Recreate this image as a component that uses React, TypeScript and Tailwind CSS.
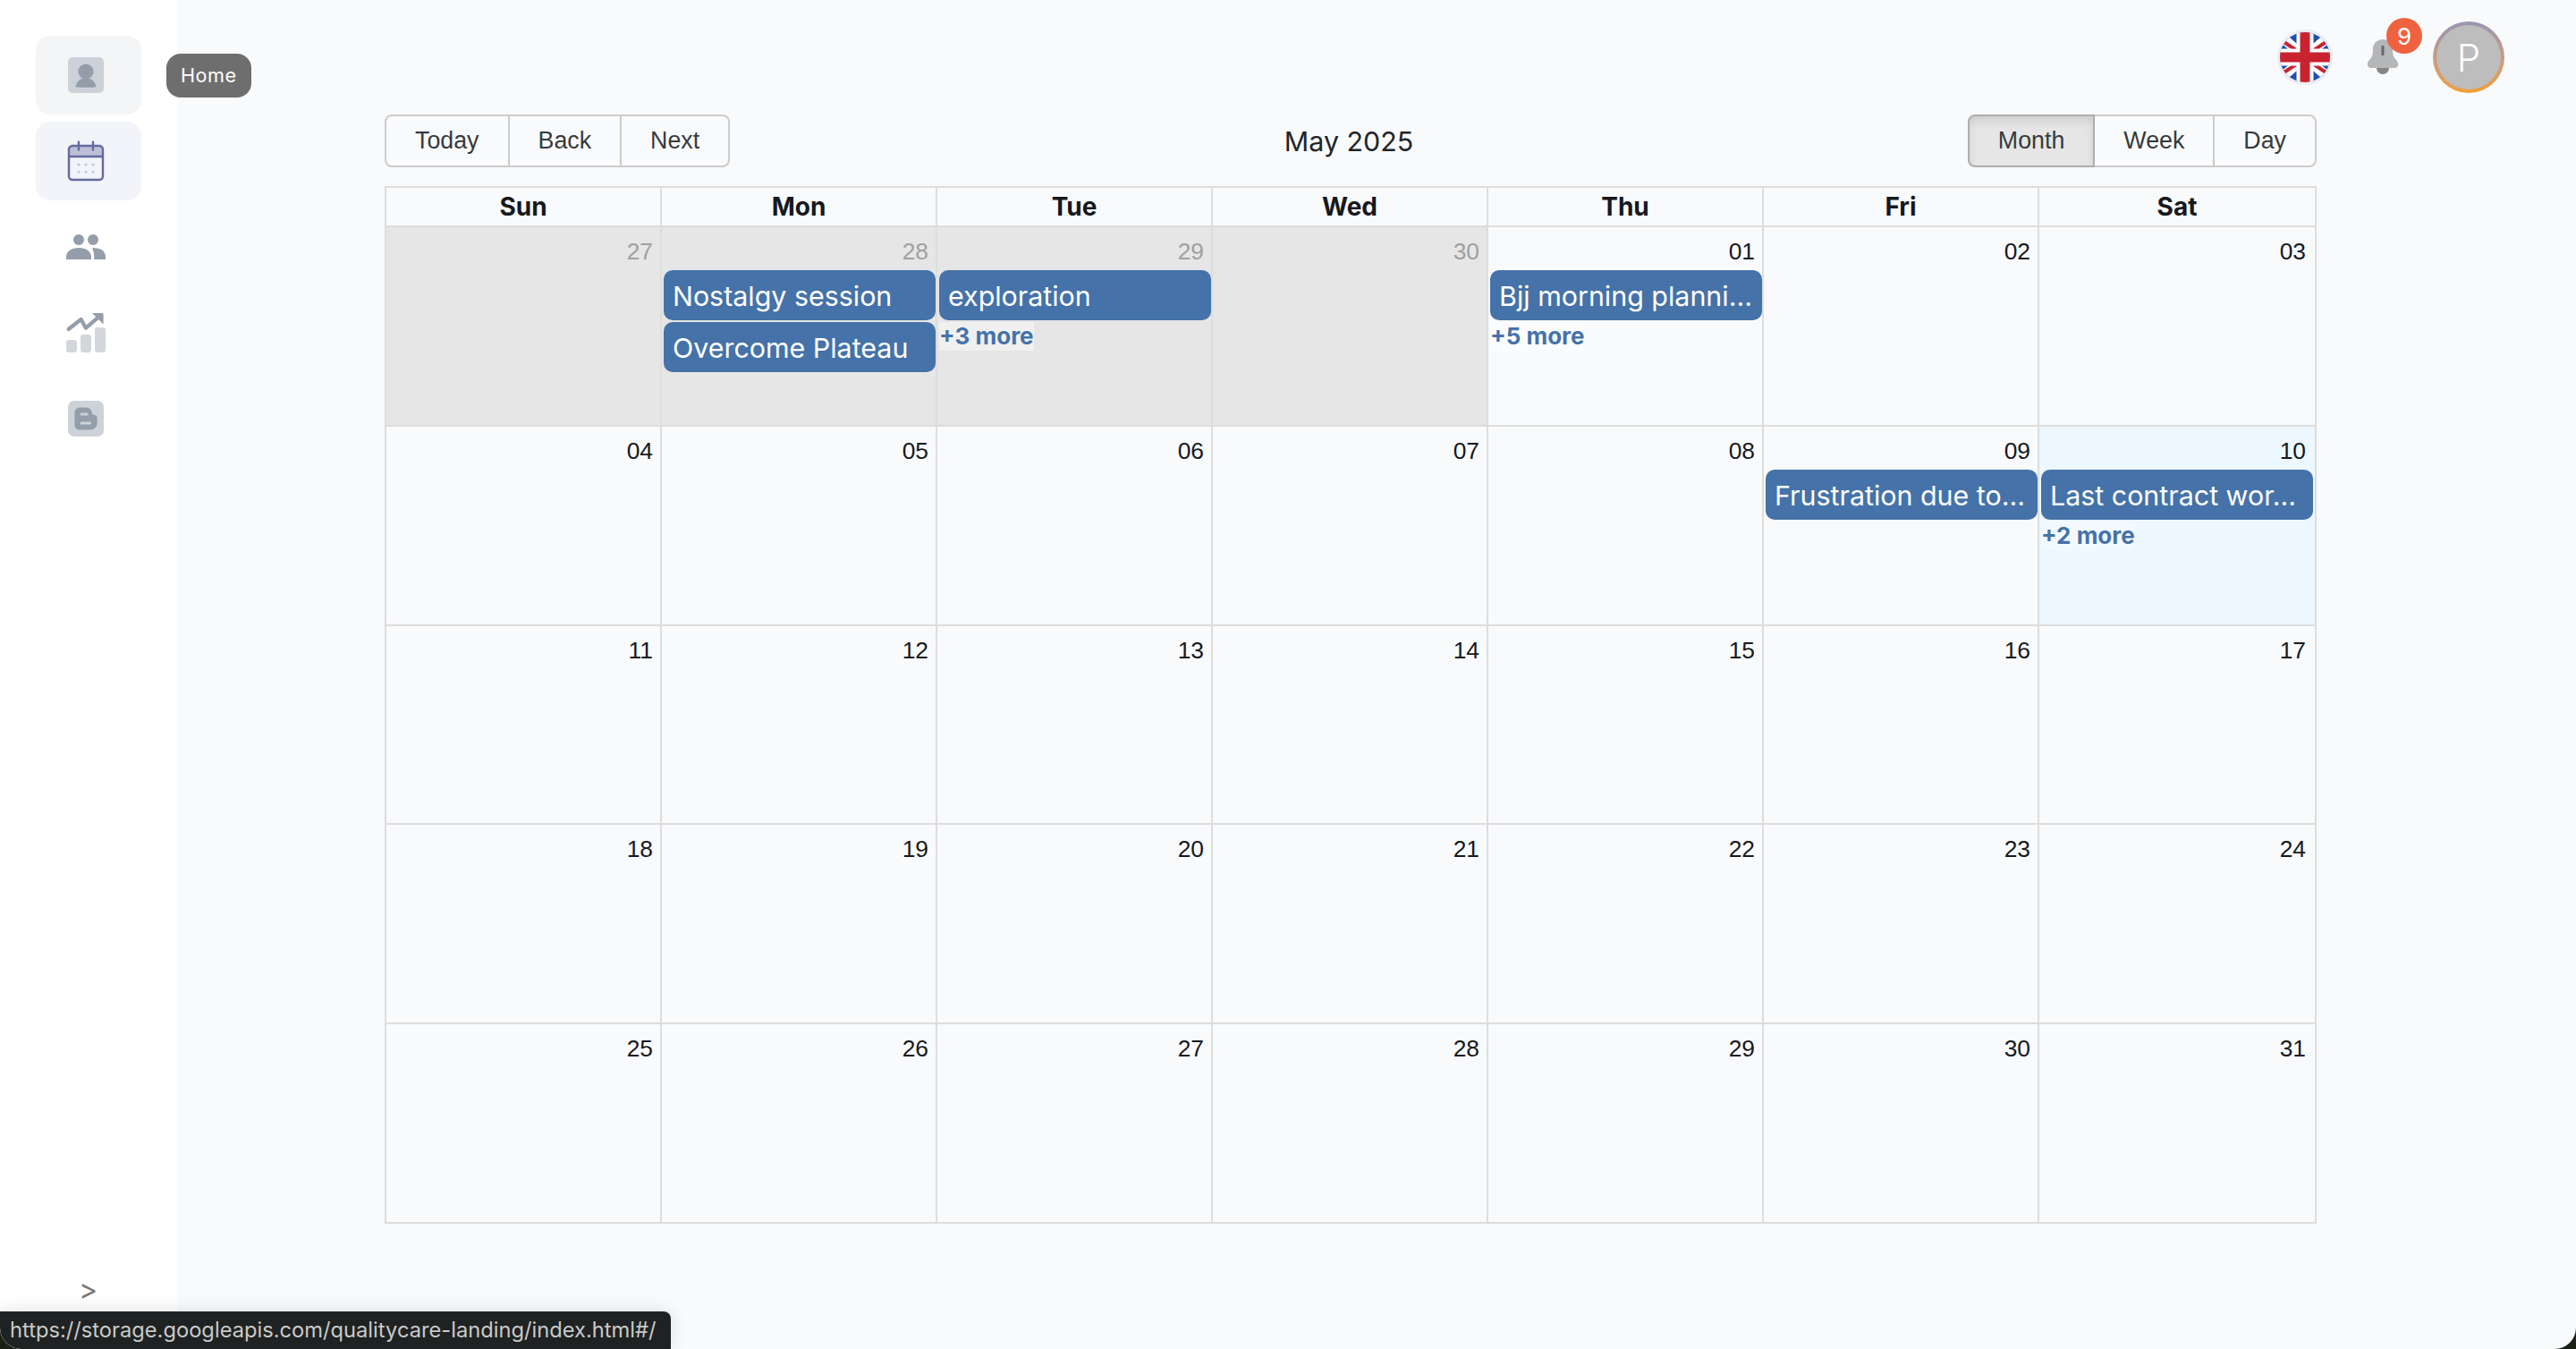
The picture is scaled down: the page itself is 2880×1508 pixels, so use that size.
const weekDays = ["Sun", "Mon", "Tue", "Wed", "Thu", "Fri", "Sat"];

interface DayCell {
  date: string;
  off?: boolean;
  today?: boolean;
  events?: string[];
  more?: number;
}

const weeks: DayCell[][] = [
  [
    { date: "27", off: true },
    { date: "28", off: true, events: ["Nostalgy session", "Overcome Plateau"] },
    { date: "29", off: true, events: ["exploration"], more: 3 },
    { date: "30", off: true },
    { date: "01", events: ["Bjj morning planni…"], more: 5 },
    { date: "02" },
    { date: "03" },
  ],
  [
    { date: "04" },
    { date: "05" },
    { date: "06" },
    { date: "07" },
    { date: "08" },
    { date: "09", events: ["Frustration due to…"] },
    { date: "10", today: true, events: ["Last contract wor…"], more: 2 },
  ],
  ["11", "12", "13", "14", "15", "16", "17"].map((date) => ({ date })),
  ["18", "19", "20", "21", "22", "23", "24"].map((date) => ({ date })),
  ["25", "26", "27", "28", "29", "30", "31"].map((date) => ({ date })),
];

function HomeIcon() {
  return (
    <svg width="48" height="48" viewBox="0 0 24 24">
      <rect x="2" y="2" width="20" height="20" rx="2.5" fill="#cdd2d8" />
      <circle cx="12" cy="10" r="4.3" fill="#939eaa" />
      <path d="M6.3 18.6c.3-3 2.6-5 5.7-5s5.400 2 5.700 5c-3.800.4-7.600.4-11.400 0z" fill="#939eaa" />
    </svg>
  );
}

function CalendarIcon() {
  return (
    <svg width="48" height="48" viewBox="0 0 24 24">
      <path d="M4.500 3.500h15a2 2 0 0 1 2 2v4.200h-19V5.500a2 2 0 0 1 2-2z" fill="#bcbfd6" />
      <rect x="2.500" y="3.500" width="19" height="19" rx="2" fill="none" stroke="#65699f" strokeWidth="1.200" />
      <path d="M2.500 9.500h19" stroke="#65699f" strokeWidth="1.200" />
      <path d="M8 1.300v4.500M16 1.300v4.500" stroke="#65699f" strokeWidth="1.200" strokeLinecap="round" />
      {[8, 12, 16].map((x) =>
        [14, 18].map((y) => <circle key={`${x}-${y}`} cx={x} cy={y} r="0.8" fill="#c5c7de" />),
      )}
    </svg>
  );
}

function PeopleIcon() {
  return (
    <svg width="48" height="48" viewBox="0 0 24 24" fill="#939eaa">
      <circle cx="8" cy="8" r="3" />
      <circle cx="16" cy="8" r="3" />
      <path d="M1 19v-1.500c0-3 3-5 7-5s7 2 7 5V19z" />
      <path d="M15.500 12.700c4.300-.5 7.500 1.400 7.500 4.800V19h-6.400v-1.500c0-1.900-.4-3.500-1.100-4.800z" />
    </svg>
  );
}

function ChartIcon() {
  return (
    <svg width="48" height="48" viewBox="0 0 24 24">
      <rect x="1" y="16" width="6" height="7" rx="1.500" fill="#d3d7dc" />
      <rect x="9" y="13" width="6" height="10" rx="1.500" fill="#d3d7dc" />
      <rect x="17" y="9" width="6" height="14" rx="1.500" fill="#d3d7dc" />
      <path d="M2.300 10l7-5.500 2.700 4.800 7-6" fill="none" stroke="#939eaa" strokeWidth="2.100" strokeLinecap="round" strokeLinejoin="round" />
      <path d="M15.500 1h5.500a.8.8 0 0 1 .8.8v5.400z" fill="#939eaa" />
    </svg>
  );
}

function BlogIcon() {
  return (
    <svg width="48" height="48" viewBox="0 0 24 24">
      <rect x="2" y="2" width="20" height="20" rx="3.500" fill="#cdd2d8" />
      <path d="M8.500 5.700h3.500a3.500 3.500 0 0 1 3.500 3.300c0 .6.400.8 1 .9.900.1 1.800.7 1.800 1.700v2.900a3.800 3.800 0 0 1-3.800 3.800H8.500a2.800 2.800 0 0 1-2.800-2.800V8.500a2.800 2.800 0 0 1 2.800-2.800z" fill="#939eaa" />
      <rect x="8.800" y="8.700" width="4.600" height="1.500" rx="0.750" fill="#cdd2d8" />
      <rect x="8.800" y="13.800" width="6.200" height="1.500" rx="0.750" fill="#cdd2d8" />
    </svg>
  );
}

function UkFlag() {
  return (
    <svg width="56" height="56" viewBox="0 0 56 56">
      <defs>
        <clipPath id="flag-circle">
          <circle cx="28" cy="28" r="28" />
        </clipPath>
      </defs>
      <g clipPath="url(#flag-circle)">
        <rect width="56" height="56" fill="#1f4fb0" />
        <path d="M-2 2L58 54M58 2L-2 54" stroke="#fff" strokeWidth="11" />
        <path d="M0 8L24 24M56 8L32 24M0 48L24 32M56 48L32 32" stroke="#c8232f" strokeWidth="4" />
        <path d="M28 0V56M0 28H56" stroke="#fff" strokeWidth="19" />
        <path d="M28 0V56M0 28H56" stroke="#c8232f" strokeWidth="11" />
      </g>
    </svg>
  );
}

function BellIcon() {
  return (
    <svg width="36" height="40" viewBox="0 0 36 40">
      <path d="M11 32h14a7 7 0 0 1-14 0z" fill="#858585" />
      <path d="M18 0c7 0 11 5 11 11 0 6 1 9 4 12 3 3 3 8-1 9H4c-4-1-4-6-1-9 3-3 4-6 4-12C7 5 11 0 18 0z" fill="#b5b6b8" />
      <rect x="16.500" y="7" width="3" height="11" rx="1" fill="#666" />
    </svg>
  );
}

const navIcons = [HomeIcon, CalendarIcon, PeopleIcon, ChartIcon, BlogIcon];

function Sidebar() {
  return (
    <aside className="relative w-[198px] shrink-0 bg-white flex flex-col pt-[40px] pl-[40px] pb-[50px]">
      <nav className="flex flex-col gap-[8px]">
        {navIcons.map((Icon, i) => (
          <div
            key={i}
            className={`w-[118px] h-[88px] pl-[32px] flex items-center rounded-[16px] ${
              i === 0 ? "bg-[#f4f5f6]" : i === 1 ? "bg-[#f2f4f9]" : ""
            }`}
          >
            <Icon />
          </div>
        ))}
      </nav>
      <div className="absolute left-[186px] top-[60px] z-10 h-[49px] px-[16px] flex items-center rounded-[16px] bg-[#6e6e6e] text-white text-[21.6px] tracking-[0.5px]">
        Home
      </div>
      <div className="mt-auto pl-[48px] text-[32px] leading-[32px] text-[#777]">&gt;</div>
    </aside>
  );
}

function ToolbarGroup({ labels, active }: { labels: string[]; active?: string }) {
  return (
    <div className="flex font-['Liberation_Sans',sans-serif] text-[26.8px] text-[#373a3c]">
      {labels.map((label, i) => (
        <button
          key={label}
          className={`h-[59px] px-[32px] border-2 ${
            label === active
              ? "relative bg-[#e6e6e6] border-[#adadad] shadow-[inset_0_6px_10px_rgba(0,0,0,0.1)]"
              : "border-[#ccc]"
          } ${i > 0 ? "-ml-[2px]" : ""} ${i === 0 ? "rounded-l-[8px]" : ""} ${
            i === labels.length - 1 ? "rounded-r-[8px]" : ""
          }`}
        >
          {label}
        </button>
      ))}
    </div>
  );
}

function DayBox({ day }: { day: DayCell }) {
  return (
    <div
      className={`min-w-0 border-l-2 border-[#ddd] last:pr-[2px] ${
        day.off ? "bg-[#e6e6e6]" : day.today ? "bg-[#ecf7ff]" : ""
      }`}
    >
      <div
        className={`h-[48px] pt-[8px] pr-[8px] text-right font-['Liberation_Sans',sans-serif] text-[26.4px] leading-[38px] ${
          day.off ? "text-[#a0a0a0]" : "text-[#16191d]"
        }`}
      >
        {day.date}
      </div>
      <div className="flex flex-col gap-[2px] pl-[2px]">
        {day.events?.map((title) => (
          <div
            key={title}
            className="h-[56px] px-[10px] rounded-[10px] bg-[#4572a8] text-white text-[30.4px] leading-[58px] whitespace-nowrap overflow-hidden"
          >
            {title}
          </div>
        ))}
        {day.more && (
          <div className="self-start h-[32px] text-[26px] leading-[32px] font-bold text-[#4572a8] bg-white/40">
            +{day.more} more
          </div>
        )}
      </div>
    </div>
  );
}

export default function App() {
  return (
    <div className="h-[1508px] bg-[#1c2014] font-['Inter',sans-serif]">
      <div className="relative h-full flex rounded-b-[24px] overflow-hidden bg-[#f9fafc]">
        <Sidebar />
        <main className="flex-1 min-w-0">
          <header className="h-[128px] pt-[24px] pr-[80px] flex items-start justify-end">
            <div className="h-[80px] flex items-center gap-[38px]">
              <div className="p-[3px] rounded-full bg-[#ecedf0]">
                <UkFlag />
              </div>
              <div className="relative">
                <BellIcon />
                <span className="absolute -top-[24px] left-[22px] w-[40px] h-[40px] rounded-full bg-[#ee6240] text-white text-[26px] flex items-center justify-center">
                  9
                </span>
              </div>
              <div className="w-[80px] h-[80px] p-[4px] rounded-full bg-linear-to-b from-[#9a94b4] to-[#f0a030]">
                <div className="w-full h-full rounded-full bg-[#bdbdbd] text-white text-[42px] font-light flex items-center justify-center">
                  P
                </div>
              </div>
            </div>
          </header>

          <section className="ml-[232px] w-[2160px]">
            <div className="flex items-center justify-between mb-[21px]">
              <ToolbarGroup labels={["Today", "Back", "Next"]} />
              <div className="mt-[3px] text-[30.4px] text-[#212529]">May 2025</div>
              <ToolbarGroup labels={["Month", "Week", "Day"]} active="Month" />
            </div>

            <div className="h-[1160px] flex flex-col border-t-2 border-r-2 border-[#ddd]">
              <div className="h-[44px] shrink-0 grid grid-cols-[repeat(6,308px)_1fr] border-b-2 border-[#ddd]">
                {weekDays.map((d) => (
                  <div key={d} className="border-l-2 border-[#ddd] text-center text-[28px] leading-[42px] font-bold text-[#16191d]">
                    {d}
                  </div>
                ))}
              </div>
              {weeks.map((week) => (
                <div key={week[0].date} className="flex-1 min-h-0 grid grid-cols-[repeat(6,308px)_1fr] border-b-2 border-[#ddd]">
                  {week.map((day) => (
                    <DayBox key={day.date} day={day} />
                  ))}
                </div>
              ))}
            </div>
          </section>
        </main>

        <div className="absolute left-0 bottom-0 h-[42px] w-[750px] pl-[11px] flex items-center rounded-tr-[8px] bg-[#1f2222] text-[23.7px] whitespace-nowrap text-[#c9c9c9] shadow-[0_0_20px_rgba(0,0,0,0.12)]">
          https://storage.googleapis.com/qualitycare-landing/index.html#/
        </div>
      </div>
    </div>
  );
}
